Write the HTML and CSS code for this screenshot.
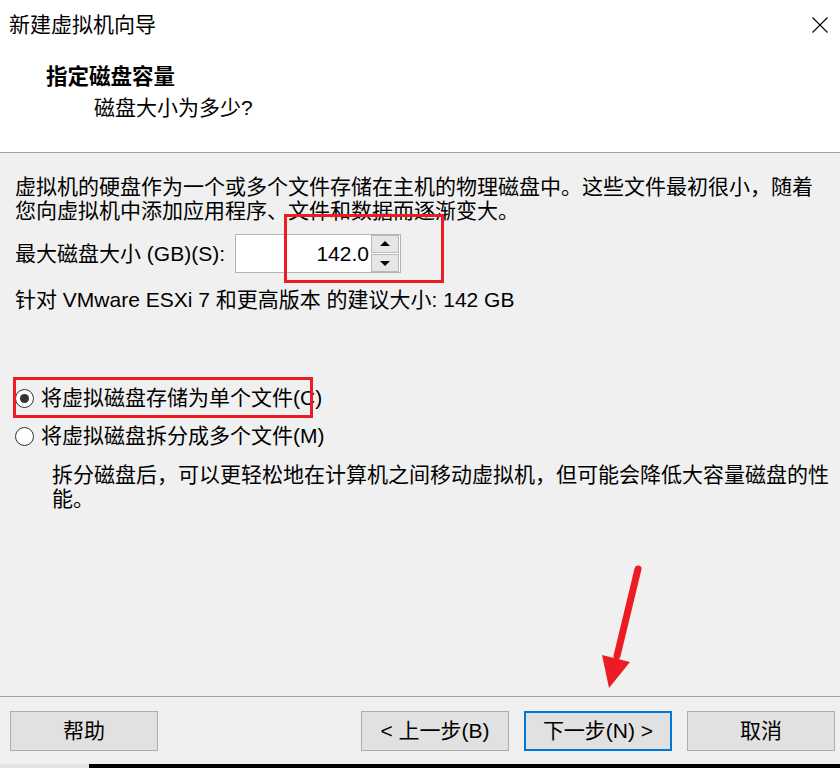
FILE: index.html
```html
<!DOCTYPE html>
<html lang="zh-CN">
<head>
  <meta charset="UTF-8" />
  <meta name="viewport" content="width=device-width, initial-scale=1" />
  <title>新建虚拟机向导</title>
  <link rel="stylesheet" href="styles.css">
</head>
<body>
  <div class="wizard">
    <header class="head">
      <div class="titlebar">
        <span class="title">新建虚拟机向导</span>
        <svg class="close" width="16" height="16" viewBox="0 0 16 16">
          <path d="M0.5 0.5 L15.5 15.5 M15.5 0.5 L0.5 15.5" stroke="#000" stroke-width="1.1" fill="none"/>
        </svg>
      </div>
      <div class="step">
        <h1>指定磁盘容量</h1>
        <p>磁盘大小为多少?</p>
      </div>
    </header>

    <main class="content">
      <p class="intro">虚拟机的硬盘作为一个或多个文件存储在主机的物理磁盘中。这些文件最初很小，随着您向虚拟机中添加应用程序、文件和数据而逐渐变大。</p>

      <div class="size-row">
        <label for="diskSize">最大磁盘大小 (GB)(S):</label>
        <div class="spin">
          <input id="diskSize" value="142.0" />
          <div class="spin-btns">
            <button class="up"></button>
            <button class="down"></button>
          </div>
        </div>
        <span class="mark mark-size"></span>
      </div>

      <p class="hint">针对 VMware ESXi 7 和更高版本 的建议大小: 142 GB</p>

      <div class="radios">
        <div class="radio checked">
          <span class="dot"></span>
          <span>将虚拟磁盘存储为单个文件(C)</span>
          <span class="mark mark-radio"></span>
        </div>
        <div class="radio">
          <span class="dot"></span>
          <span>将虚拟磁盘拆分成多个文件(M)</span>
        </div>
        <p class="desc">拆分磁盘后，可以更轻松地在计算机之间移动虚拟机，但可能会降低大容量磁盘的性能。</p>
      </div>
    </main>

    <svg class="arrow" width="50" height="135" viewBox="0 0 50 135">
      <line x1="43" y1="9" x2="22" y2="96" stroke="#ed1c24" stroke-width="7" stroke-linecap="round"/>
      <polygon points="14,128 35,102 7,95" fill="#ed1c24"/>
    </svg>

    <footer class="foot">
      <div class="buttons">
        <button class="btn">帮助</button>
        <span class="spacer"></span>
        <button class="btn">&lt; 上一步(B)</button>
        <button class="btn default">下一步(N) &gt;</button>
        <button class="btn">取消</button>
      </div>
      <div class="taskbar"></div>
    </footer>
  </div>
</body>
</html>
```

FILE: styles.css
```css
body {
  margin: 0;
  font-family: "Liberation Sans", "Noto Sans CJK SC", sans-serif;
  font-size: 21px;
  line-height: 24px;
  color: #000;
  background: #f0f0f0;
  text-spacing-trim: space-all;
}
.wizard {
  position: relative;
  height: 768px;
  display: flex;
  flex-direction: column;
  overflow: hidden;
}
.head {
  background: #fff;
  height: 152px;
  border-bottom: 1px solid #a0a0a0;
  flex-shrink: 0;
}
.titlebar {
  height: 50px;
  display: flex;
  align-items: center;
  justify-content: space-between;
  padding: 0 12px 0 9px;
}
.close { display: block; }
.step { padding-left: 46px; margin-top: 15px; }
.step h1 {
  margin: 0;
  font-size: 21.5px;
  line-height: 24px;
  font-weight: bold;
}
.step p {
  margin: 7px 0 0 48px;
}
.content {
  padding: 22px 8px 0 15px;
}
.intro { margin: 0; }
.size-row {
  position: relative;
  display: flex;
  align-items: center;
  gap: 10px;
  margin-top: 11px;
}
.spin {
  display: flex;
  align-items: center;
  width: 164px;
  height: 37px;
  border: 1px solid #b4b4b4;
  background: #fff;
}
.spin input {
  flex: 1;
  min-width: 0;
  border: none;
  outline: none;
  background: transparent;
  font: inherit;
  font-size: 21px;
  text-align: right;
  padding: 0 2px 0 0;
}
.spin-btns {
  display: flex;
  flex-direction: column;
  gap: 1px;
  width: 28px;
  margin-right: 1px;
}
.spin-btns button {
  height: 18px;
  padding: 0;
  border: 1px solid #b9b9b9;
  background: #e6e6e6;
  position: relative;
}
.spin-btns button::after {
  content: "";
  position: absolute;
  left: 50%;
  top: 50%;
  margin-left: -5px;
  border-left: 5px solid transparent;
  border-right: 5px solid transparent;
}
.spin-btns .up::after { margin-top: -3px; border-bottom: 5px solid #000; }
.spin-btns .down::after { margin-top: -2px; border-top: 5px solid #000; }
.hint { margin: 15px 0 0; }
.radios { margin-top: 74px; }
.radio {
  position: relative;
  display: flex;
  align-items: center;
  gap: 7px;
  height: 24px;
}
.radio + .radio { margin-top: 14px; }
.dot {
  width: 17px;
  height: 17px;
  border: 1px solid #333;
  border-radius: 50%;
  background: #fff;
  display: flex;
  align-items: center;
  justify-content: center;
}
.radio.checked .dot::after {
  content: "";
  width: 9px;
  height: 9px;
  border-radius: 50%;
  background: #333;
}
.desc { margin: 15px 0 0 37px; }
.mark {
  position: absolute;
  border: 3px solid #ed1c24;
  box-sizing: border-box;
  pointer-events: none;
}
.mark-size { left: 269px; top: -20px; width: 160px; height: 69px; }
.mark-radio { left: -2px; top: -9px; width: 300px; height: 41px; }
.arrow {
  position: absolute;
  left: 595px;
  top: 560px;
}
.foot {
  margin-top: auto;
  border-top: 1px solid #a0a0a0;
}
.buttons {
  display: flex;
  gap: 15px;
  padding: 14px 5px 0 10px;
}
.spacer { flex: 1; }
.btn {
  width: 148px;
  height: 40px;
  border: 1px solid #adadad;
  background: #e1e1e1;
  font: inherit;
  color: #000;
  padding: 0;
}
.btn.default {
  border: 2px solid #0078d7;
}
.taskbar {
  margin-top: 13px;
  height: 4px;
  background: linear-gradient(to right, #e3e3e3 89px, #000 89px);
}
```
